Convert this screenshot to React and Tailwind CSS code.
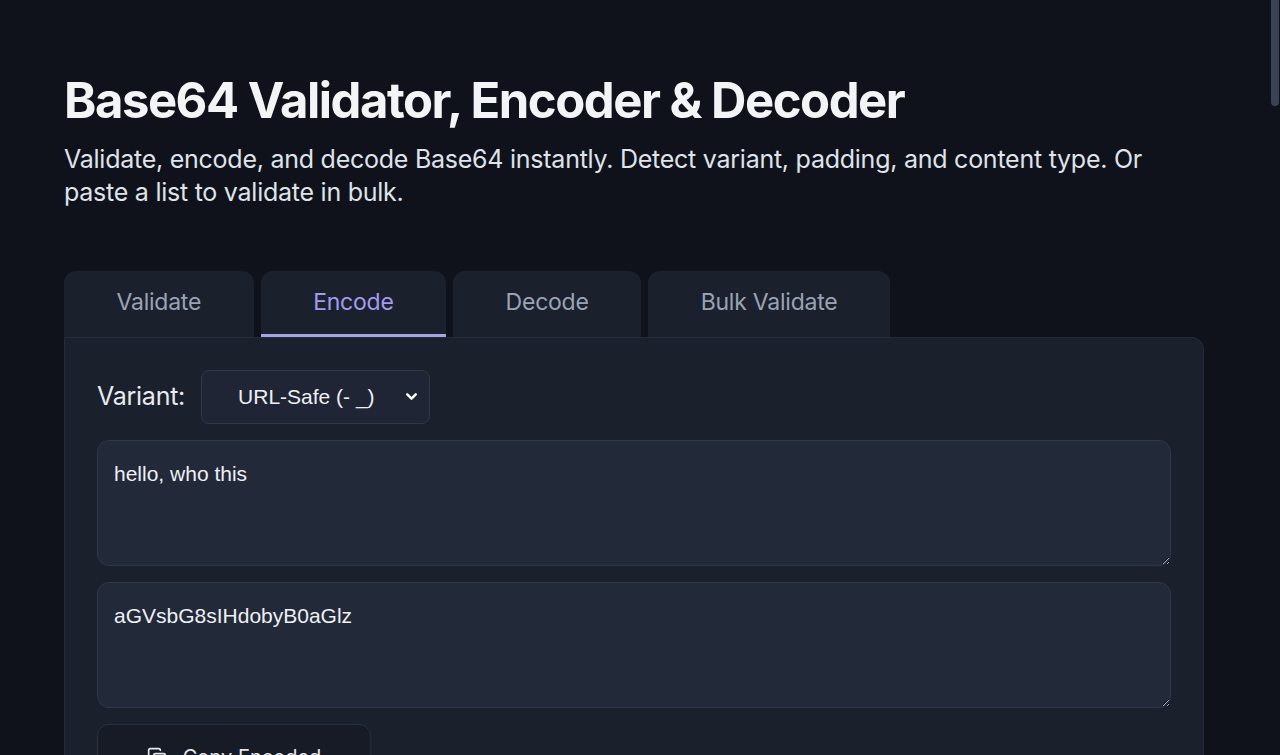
import React, { useState } from "react";
import { Copy, ChevronDown } from "lucide-react";

const tabs = ["Validate", "Encode", "Decode", "Bulk Validate"];

const App = () => {
  const [active, setActive] = useState("Encode");
  const [input, setInput] = useState("hello, who this");

  return (
    <div
      className="h-screen flex bg-[#0f121a] text-[#e5e8ee] overflow-hidden"
      style={{ fontFamily: "Inter, 'Noto Sans', sans-serif" }}
    >
      <div className="flex-1 overflow-hidden">
        <div className="w-[1140px] ml-16 pt-[72px] pb-24">
          <h1 className="text-[49px] leading-[1.2] font-bold tracking-[-0.03em] text-[#f3f4f6]">
            Base64 Validator, Encoder &amp; Decoder
          </h1>
          <p className="mt-3 text-[25px] leading-[33px] text-[#dfe3ea] tracking-[-0.01em] pr-10">
            Validate, encode, and decode Base64 instantly. Detect variant, padding, and content type. Or
            paste a list to validate in bulk.
          </p>

          {/* tabs */}
          <div className="mt-[62px] flex gap-[7px]">
            {tabs.map((t) => (
              <button
                key={t}
                onClick={() => setActive(t)}
                className={
                  "h-[66px] px-[52.5px] rounded-t-xl bg-[#1b202d] text-[23px] tracking-[-0.01em] border-b-[3px] " +
                  (active === t
                    ? "text-[#a29bf0] border-[#a7a2e6]"
                    : "text-[#9aa3b5] border-transparent")
                }
              >
                {t}
              </button>
            ))}
          </div>

          {/* panel */}
          <div className="rounded-b-xl rounded-tr-xl bg-[#1b202d] border border-[#252b3a] px-8 pt-8 pb-8">
            <div className="flex items-center gap-4">
              <span className="text-[25px] tracking-[-0.01em] text-[#e8ebf0]">Variant:</span>
              <div className="relative w-[229px] h-[54px] rounded-lg bg-[#1f2535] border border-[#313849] flex items-center">
                <span
                  className="pl-9 text-[21px] text-[#eef0f4]"
                  style={{ fontFamily: "'Liberation Sans', Arial, sans-serif" }}
                >
                  URL-Safe (- _)
                </span>
                <ChevronDown className="absolute right-[9px] w-[17px] h-[17px] text-white" strokeWidth={3.5} />
              </div>
            </div>

            <textarea
              value={input}
              onChange={(e) => setInput(e.target.value)}
              style={{ fontFamily: "'Liberation Sans', Arial, sans-serif" }}
              className="mt-4 block w-full h-[126px] rounded-xl bg-[#222939] border border-[#2f3748] px-4 py-[17px] text-[21px] text-[#eef0f4] outline-none resize-y"
            />
            <textarea
              readOnly
              value="aGVsbG8sIHdobyB0aGlz"
              style={{ fontFamily: "'Liberation Sans', Arial, sans-serif" }}
              className="mt-4 block w-full h-[126px] rounded-xl bg-[#222939] border border-[#2f3748] px-4 py-[17px] text-[21px] text-[#eef0f4] outline-none resize-y"
            />

            <button className="mt-4 w-[274px] h-[66px] rounded-xl bg-[#171b25] border border-[#2a3040] flex items-center justify-center gap-4 text-[20px] text-[#e5e8ee]">
              <Copy className="w-5 h-5" />
              Copy Encoded
            </button>
          </div>
        </div>
      </div>

      {/* scrollbar */}
      <div className="w-[10px] shrink-0 bg-[#0f121a]">
        <div className="h-[106px] w-[8px] mx-auto rounded-b-full bg-[#3a4254]" />
      </div>
    </div>
  );
};

export default App;
